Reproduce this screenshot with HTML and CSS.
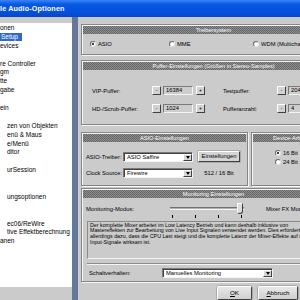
FILE: index.html
```html
<!DOCTYPE html>
<html lang="de">
<head>
    <meta charset="UTF-8">
    <title>Audio-Optionen</title>
    <link rel="stylesheet" href="styles.css">
</head>
<body>
    <div class="titlebar">le Audio-Optionen</div>
    <div class="main">
        <ul class="tree">
            <li>onen</li>
            <li class="sel"><span>Setup</span></li>
            <li>evices</li>
            <li></li>
            <li>re Controller</li>
            <li>gm</li>
            <li>tte</li>
            <li>gabe</li>
            <li></li>
            <li>ein</li>
            <li></li>
            <li class="sub">zen von Objekten</li>
            <li class="sub">enü &amp; Maus</li>
            <li class="sub">e/Menü</li>
            <li class="sub">ditor</li>
            <li></li>
            <li class="sub">urSession</li>
            <li></li>
            <li></li>
            <li class="sub">ungsoptionen</li>
            <li></li>
            <li></li>
            <li class="sub">ec06/ReWire</li>
            <li class="sub">tive Effektberechnung</li>
            <li>anen</li>
        </ul>
        <div class="splitter"></div>
        <div class="pages">
            <div class="panel p-driver">
                <div class="panel-head">Treibersystem</div>
                <div class="driver-row">
                    <label class="opt w79"><span class="radio on"></span>ASIO</label>
                    <label class="opt w84"><span class="radio"></span>MME</label>
                    <label class="opt"><span class="radio"></span>WDM (Multichannel)</label>
                </div>
            </div>

            <div class="panel p-buffer">
                <div class="panel-head">Puffer-Einstellungen (Größen in Stereo-Samples)</div>
                <div class="buffer-row">
                    <span class="lbl w60">VIP-Puffer:</span>
                    <span class="spin">-</span>
                    <span class="field">16384</span>
                    <span class="spin plus">+</span>
                    <span class="lbl w54">Testpuffer:</span>
                    <span class="spin">-</span>
                    <span class="field">2048</span>
                </div>
                <div class="buffer-row">
                    <span class="lbl w60">HD-/Scrub-Puffer:</span>
                    <span class="spin">-</span>
                    <span class="field">1024</span>
                    <span class="spin plus">+</span>
                    <span class="lbl w54">Pufferanzahl:</span>
                    <span class="spin">-</span>
                    <span class="field">4</span>
                </div>
            </div>

            <div class="panel-pair">
                <div class="panel p-asio">
                    <div class="panel-head">ASIO-Einstellungen</div>
                    <div class="asio-row">
                        <span class="lbl w37">ASIO-Treiber:</span>
                        <span class="select w70"><span class="val">ASIO Saffire</span><span class="drop"></span></span>
                        <span class="btn w42">Einstellungen</span>
                    </div>
                    <div class="asio-row">
                        <span class="lbl w37">Clock Source:</span>
                        <span class="select w70"><span class="val">Firewire</span><span class="drop"></span></span>
                        <span class="static w42">512 / 16 Bit</span>
                    </div>
                </div>
                <div class="panel p-device">
                    <div class="panel-head left">Device-Arbeitsweise</div>
                    <div class="device-list">
                        <label class="opt"><span class="radio on"></span>16 Bit</label>
                        <label class="opt"><span class="radio"></span>24 Bit</label>
                    </div>
                </div>
            </div>

            <div class="panel p-monitor">
                <div class="panel-head">Monitoring Einstellungen</div>
                <div class="mode-row">
                    <span class="lbl w82">Monitoring-Modus:</span>
                    <div class="slider">
                        <div class="track"></div>
                        <div class="ticks"><i></i><i></i><i></i><i></i></div>
                        <div class="thumb"></div>
                    </div>
                    <span class="lbl mixer">Mixer FX Monitoring</span>
                </div>
                <div class="desc">
                    <div>Der komplette Mixer arbeitet im Low Latency Betrieb und kann deshalb inklusive von</div>
                    <div>Mastereffekten zur Bearbeitung von Live Input Signalen verwendet werden. Dies erfordert</div>
                    <div>allerdings dazu, dass die CPU Last steigt und die komplette Latenz der Mixer-Effekte auf die</div>
                    <div>Input-Signale wirksam ist.</div>
                </div>
                <div class="sep"></div>
                <div class="switch-row">
                    <span class="lbl w73">Schaltverhalten:</span>
                    <span class="select w111"><span class="val">Manuelles Monitoring</span><span class="drop"></span></span>
                </div>
            </div>

            <div class="buttons">
                <span class="btn dlg w35"><u>O</u>K</span>
                <span class="btn dlg w40"><u>A</u>bbruch</span>
            </div>
        </div>
    </div>
</body>
</html>
```

FILE: styles.css
```css
* {
    box-sizing: border-box;
}
body {
    margin: 0;
    width: 300px;
    height: 300px;
    overflow: hidden;
    background: #cbcbcb;
    font-family: "Liberation Sans", Arial, sans-serif;
    color: #000;
}
.titlebar {
    height: 17px;
    background: linear-gradient(#3a86f4, #0758e4 25%, #0350dc 75%, #0a46bf);
    color: #fff;
    font-weight: bold;
    font-size: 7.2px;
    line-height: 17px;
    letter-spacing: 0.15px;
    white-space: nowrap;
}
.main {
    display: flex;
    height: 283px;
}

/* tree */
.tree {
    width: 72px;
    flex-shrink: 0;
    margin: 6px 0 13px;
    padding: 1px 0 0;
    list-style: none;
    background: #fff;
    font-size: 6.5px;
    overflow: hidden;
}
.tree li {
    height: 8.9px;
    line-height: 8.9px;
    white-space: nowrap;
}
.tree li.sub {
    padding-left: 7px;
}
.tree li.sel span {
    display: inline-block;
    height: 8px;
    line-height: 8px;
    padding: 0 4px 0 1px;
    background: #316ac5;
    color: #fff;
}
.splitter {
    width: 6px;
    flex-shrink: 0;
    background: #61779b;
}

/* pages */
.pages {
    width: 268px;
    flex-shrink: 0;
    padding: 7px 0 0 3px;
    display: flex;
    flex-direction: column;
    font-size: 5.8px;
}
.panel {
    border: 1px solid #858585;
    box-shadow: inset 1px 1px #f5f5f5, 1px 1px #f5f5f5;
    padding: 1px;
}
.panel-head {
    height: 8px;
    line-height: 8px;
    background: repeating-conic-gradient(#666 0 25%, #8e8e8e 0 50%) 0 0 / 2px 2px;
    color: #fff;
    font-size: 5.6px;
    text-align: center;
    white-space: nowrap;
    overflow: hidden;
}
.panel-head.left {
    text-align: left;
    padding-left: 20px;
}
.lbl {
    white-space: nowrap;
    flex-shrink: 0;
}
.w35 { width: 35px; }
.w37 { width: 37px; }
.w40 { width: 40px; }
.w42 { width: 42px; }
.w54 { width: 54px; }
.w60 { width: 60px; }
.w70 { width: 70px; }
.w73 { width: 73px; }
.w79 { width: 79px; }
.w82 { width: 82px; }
.w84 { width: 84px; }
.w111 { width: 111px; }

/* radios */
.opt {
    display: flex;
    align-items: center;
    gap: 2px;
    white-space: nowrap;
    flex-shrink: 0;
}
.radio {
    width: 6px;
    height: 6px;
    border-radius: 50%;
    background: #fff;
    border: 1px solid;
    border-color: #6a6a6a #e4e4e4 #e4e4e4 #6a6a6a;
    display: flex;
    align-items: center;
    justify-content: center;
}
.radio.on::after {
    content: "";
    width: 2px;
    height: 2px;
    border-radius: 50%;
    background: #000;
}

.p-driver {
    height: 31px;
}
.driver-row {
    height: 19px;
    display: flex;
    align-items: center;
    padding-left: 7px;
}

/* buffer */
.p-buffer {
    margin-top: 5px;
    height: 65px;
    padding-bottom: 10px;
}
.buffer-row {
    display: flex;
    align-items: center;
    height: 9px;
    margin-top: 9px;
    padding-left: 9px;
}
.p-buffer .panel-head + .buffer-row {
    margin-top: 16px;
}
.spin {
    width: 9px;
    height: 9px;
    flex-shrink: 0;
    background: #d2d2d2;
    border: 1px solid;
    border-color: #fff #404040 #404040 #fff;
    font-size: 5px;
    line-height: 6px;
    text-align: center;
}
.spin.plus {
    margin-left: 3px;
    margin-right: 18px;
}
.field {
    width: 30px;
    height: 9px;
    flex-shrink: 0;
    margin-left: 2px;
    padding-left: 2px;
    line-height: 7px;
    background: #cdcdcd;
    border: 1px solid;
    border-color: #7a7a7a #f4f4f4 #f4f4f4 #7a7a7a;
}

/* asio + device */
.panel-pair {
    display: flex;
    gap: 3px;
    margin-top: 7px;
}
.p-asio {
    width: 167px;
    height: 54px;
}
.asio-row {
    display: flex;
    align-items: center;
    height: 10px;
    margin-top: 6px;
    padding-left: 3px;
}
.p-asio .panel-head + .asio-row {
    margin-top: 10px;
}
.select {
    height: 10px;
    flex-shrink: 0;
    display: flex;
    background: #fff;
    border: 1px solid;
    border-color: #7a7a7a #f4f4f4 #f4f4f4 #7a7a7a;
    box-shadow: inset 1px 1px #404040;
}
.select .val {
    flex: 1;
    padding-left: 3px;
    line-height: 8px;
    white-space: nowrap;
}
.select .drop {
    width: 9px;
    margin: 1px 0 0;
    background: #d6d6d6;
    border: 1px solid;
    border-color: #fff #404040 #404040 #fff;
    display: flex;
    align-items: center;
    justify-content: center;
}
.select .drop::after {
    content: "";
    border-left: 2.5px solid transparent;
    border-right: 2.5px solid transparent;
    border-top: 3px solid #000;
}
.btn {
    height: 11px;
    flex-shrink: 0;
    margin-left: 5px;
    background: #d4d4d4;
    border: 1px solid;
    border-color: #fff #404040 #404040 #fff;
    box-shadow: 0 0 0 0.5px #8a8a8a;
    text-align: center;
    line-height: 9px;
    white-space: nowrap;
}
.static {
    margin-left: 5px;
    text-align: center;
    white-space: nowrap;
}
.p-device {
    width: 95px;
    height: 54px;
}
.device-list {
    padding: 7px 0 0 22px;
}
.device-list .opt {
    height: 9px;
}

/* monitoring */
.p-monitor {
    margin-top: 2px;
    height: 95px;
}
.mode-row {
    display: flex;
    height: 19px;
    margin-top: 2px;
    padding-left: 3px;
    align-items: center;
}
.slider {
    position: relative;
    width: 80px;
    height: 19px;
    flex-shrink: 0;
    padding: 7px 4px 0 2px;
}
.track {
    height: 3px;
    border-top: 1px solid #707070;
    border-bottom: 1px solid #f4f4f4;
    background: #b0b0b0;
}
.ticks {
    display: flex;
    justify-content: space-between;
    margin-top: 5px;
    padding: 0 2px;
}
.ticks i {
    width: 1px;
    height: 3px;
    background: #000;
}
.thumb {
    position: absolute;
    left: 69px;
    top: 3px;
    width: 6px;
    height: 11px;
    background: #dcdcdc;
    border: 1px solid;
    border-color: #fff #404040 #404040 #fff;
    border-radius: 0 0 3px 3px;
}
.mixer {
    margin-left: 18px;
}
.desc {
    margin: 2px 0 0 4px;
    height: 38px;
    padding: 1px 2px;
    font-size: 5.3px;
    line-height: 5.7px;
    white-space: nowrap;
    overflow: hidden;
    border: 1px solid;
    border-color: #8a8a8a #f4f4f4 #f4f4f4 #8a8a8a;
}
.sep {
    margin: 4px 4px 0;
    height: 2px;
    border-top: 1px solid #8a8a8a;
    border-bottom: 1px solid #f4f4f4;
}
.switch-row {
    display: flex;
    align-items: center;
    height: 10px;
    margin-top: 3px;
    padding-left: 6px;
}

/* dialog buttons */
.buttons {
    display: flex;
    gap: 6px;
    margin-top: 4px;
    padding-left: 136px;
}
.btn.dlg {
    height: 14px;
    margin-left: 0;
    line-height: 12px;
    font-size: 6.2px;
    border-radius: 2px;
    background: linear-gradient(#e8e8e8, #cfcfcf);
}
```
